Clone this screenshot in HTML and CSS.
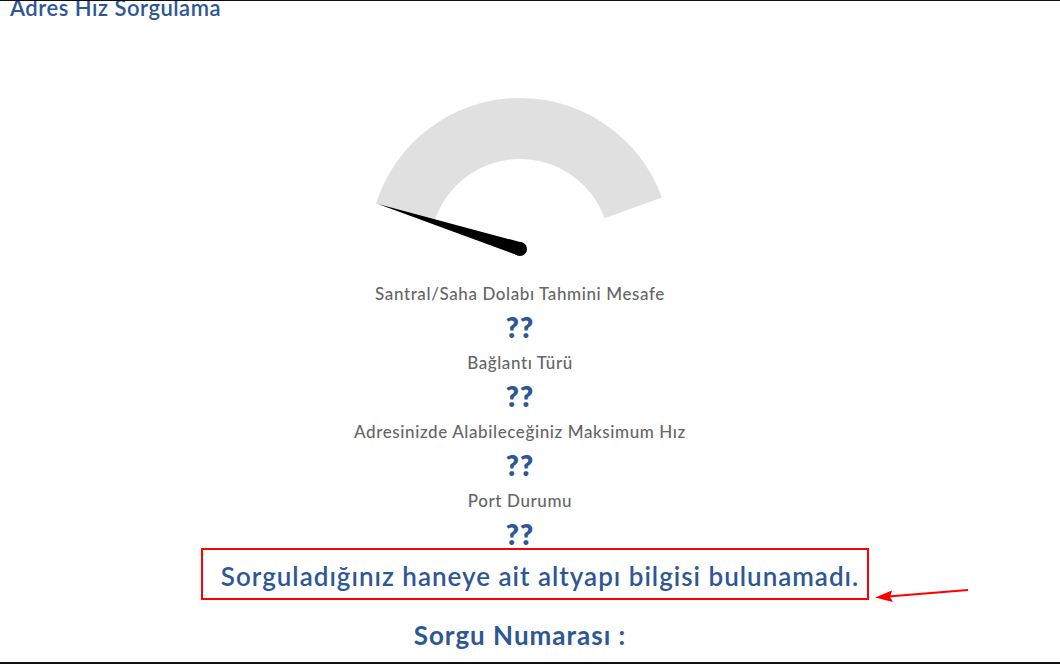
FILE: index.html
```html
<!DOCTYPE html>
<html lang="tr">
<head>
    <meta charset="UTF-8">
    <meta name="viewport" content="width=device-width, initial-scale=1.0">
    <title>Adres Hız Sorgulama</title>
    <link rel="stylesheet" href="styles.css">
</head>
<body>
    <div class="frame">
        <h2 class="title">Adres Hız Sorgulama</h2>

        <div class="result">
            <svg class="gauge" width="320" height="170" viewBox="-160 -155 320 170">
                <path d="M -144 -45.4 A 151 151 0 0 1 141.9 -51.6 L 84.6 -30.8 A 90 90 0 0 0 -85.8 -27.1 Z" fill="#e0e0e0"/>
                <path d="M 2 -6.4 L -142 -45 L -2 6.4 Z" fill="#000"/>
                <circle cx="0" cy="0" r="7" fill="#000"/>
            </svg>

            <div class="stats">
                <div class="stat-label">Santral/Saha Dolabı Tahmini Mesafe</div>
                <div class="stat-value">??</div>
                <div class="stat-label">Bağlantı Türü</div>
                <div class="stat-value">??</div>
                <div class="stat-label">Adresinizde Alabileceğiniz Maksimum Hız</div>
                <div class="stat-value">??</div>
                <div class="stat-label">Port Durumu</div>
                <div class="stat-value">??</div>
            </div>

            <div class="notice-wrap">
                <p class="notice">Sorguladığınız haneye ait altyapı bilgisi bulunamadı.</p>
            </div>

            <p class="query-no">Sorgu Numarası :</p>
        </div>

        <!-- annotation arrow -->
        <svg class="arrow" width="110" height="24" viewBox="870 582 110 24">
            <line x1="968" y1="590" x2="888" y2="596.5" stroke="#f00" stroke-width="2.2"/>
            <path d="M 875 597.5 L 892 590.5 L 890 597 L 893 602 Z" fill="#f00"/>
        </svg>
    </div>
</body>
</html>
```

FILE: styles.css
```css
html, body {
    margin: 0;
    padding: 0;
    background: #fff;
}
body {
    font-family: Lato, "Open Sans", sans-serif;
}
.frame {
    position: relative;
    height: 664px;
    box-sizing: border-box;
    border-top: 1px solid #111;
    border-bottom: 2px solid #111;
    padding: 0 30px 0 10px;
    overflow: hidden;
}
.title {
    margin: -4px 0 0 0;
    font-size: 22px;
    line-height: 22px;
    font-weight: 600;
    letter-spacing: 0.5px;
    color: #2e5796;
}
.result {
    text-align: center;
}
.gauge {
    display: block;
    margin: 75px auto 0;
}
.stats {
    margin-top: 15px;
}
.stat-label {
    font-size: 17px;
    line-height: 30px;
    font-weight: 500;
    letter-spacing: 0.6px;
    color: #666;
}
.stat-value {
    font-size: 28px;
    line-height: 36px;
    font-weight: 800;
    letter-spacing: 1px;
    color: #2e5796;
    margin-bottom: 3px;
}
.notice-wrap {
    padding-left: 30px;
    margin-top: -7px;
}
.notice {
    display: inline-block;
    margin: 0;
    padding: 4px 8px 0 18px;
    border: 2px solid #f00;
    font-size: 26px;
    line-height: 44px;
    font-weight: 600;
    letter-spacing: 1px;
    color: #2e5796;
    white-space: nowrap;
}
.query-no {
    margin: 17px 0 0;
    font-size: 26px;
    line-height: 36px;
    font-weight: 700;
    letter-spacing: 1px;
    color: #2e5796;
}
.arrow {
    position: absolute;
    left: 870px;
    top: 581px;
}
```
